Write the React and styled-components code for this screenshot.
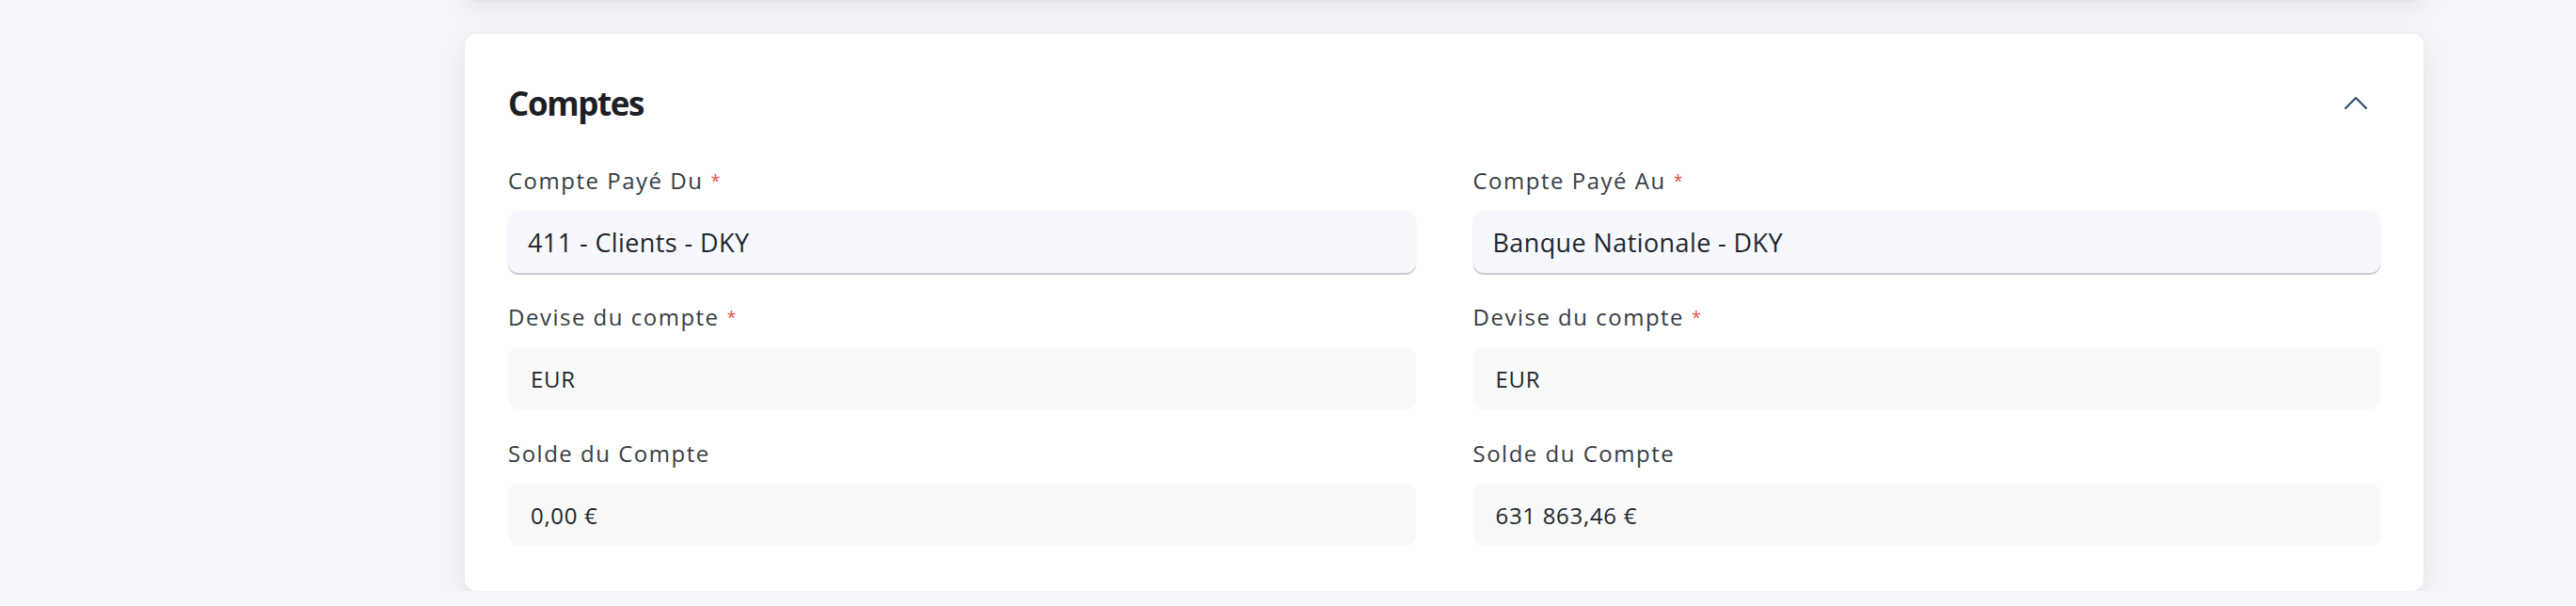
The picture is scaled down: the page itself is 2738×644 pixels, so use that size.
import React from 'react';
import styled, { createGlobalStyle } from 'styled-components';

const GlobalStyle = createGlobalStyle`
  html, body {
    margin: 0;
    padding: 0;
    background: #f4f5f9;
    font-family: "Open Sans", "Noto Sans", sans-serif;
    overflow: hidden;
  }
`;

const Main = styled.main`
  display: flex;
  flex-direction: column;
  gap: 36px;
  padding: 0 162px 0 494px;
  /* page is scrolled: the previous card sits above the fold */
  margin-top: -240px;
`;

const Card = styled.section`
  background: #ffffff;
  border-radius: 12px;
  box-shadow: 0 8px 26px rgba(25, 35, 70, 0.08), 0 1px 3px rgba(25, 35, 70, 0.04);
  padding: 46px 46px 48px;
`;

const HiddenCard = styled(Card)`
  height: 146px;
`;

const Header = styled.div`
  display: flex;
  align-items: center;
  justify-content: space-between;
  height: 54px;
  margin-bottom: 40px;
`;

const Title = styled.h2`
  margin: 0;
  font-size: 35px;
  font-weight: 700;
  color: #1c2024;
  letter-spacing: -1.4px;
`;

const Toggle = styled.button`
  width: 52px;
  height: 52px;
  border: none;
  background: transparent;
  display: flex;
  align-items: center;
  justify-content: center;
  padding: 0;
  cursor: pointer;
`;

const Grid = styled.div`
  display: grid;
  grid-template-columns: 1fr 1fr;
  column-gap: 61px;
  row-gap: 31px;
`;

const Field = styled.div`
  display: flex;
  flex-direction: column;
`;

const Label = styled.label`
  font-size: 24px;
  line-height: 32px;
  letter-spacing: 1.5px;
  color: #373c42;
  margin-bottom: 16px;
`;

const Required = styled.span`
  color: #e5534b;
  font-size: 18px;
  vertical-align: top;
  margin-left: 8px;
`;

const Value = styled.div`
  height: 66px;
  box-sizing: border-box;
  display: flex;
  align-items: center;
  border-radius: 11px;
  padding: 0 ${(p) => (p.$select ? '21px' : '24px')};
  background: ${(p) => (p.$select ? '#f7f8fd' : '#f8f9f9')};
  box-shadow: ${(p) => (p.$select ? '0 2px 1px rgba(60, 70, 85, 0.28)' : 'none')};
  font-size: ${(p) => (p.$select ? '27px' : '24px')};
  letter-spacing: ${(p) => (p.$select ? '0.4px' : '0.7px')};
  color: #22262b;
`;

const ChevronUp = () => (
  <svg width="24" height="14" viewBox="0 0 24 14" fill="none">
    <polyline points="1,13 12,2 23,13" stroke="#2d4a6b" strokeWidth="2" strokeLinecap="round" strokeLinejoin="round" />
  </svg>
);

const fields = [
  { label: 'Compte Payé Du', value: '411 - Clients - DKY', required: true, select: true },
  { label: 'Compte Payé Au', value: 'Banque Nationale - DKY', required: true, select: true },
  { label: 'Devise du compte', value: 'EUR', required: true },
  { label: 'Devise du compte', value: 'EUR', required: true },
  { label: 'Solde du Compte', value: '0,00 €' },
  { label: 'Solde du Compte', value: '631 863,46 €' },
];

export default function App() {
  return (
    <>
      <GlobalStyle />
      <Main>
        <HiddenCard />
        <Card>
          <Header>
            <Title>Comptes</Title>
            <Toggle aria-label="Replier">
              <ChevronUp />
            </Toggle>
          </Header>
          <Grid>
            {fields.map((f, i) => (
              <Field key={i}>
                <Label>
                  {f.label}
                  {f.required && <Required>*</Required>}
                </Label>
                <Value $select={f.select}>{f.value}</Value>
              </Field>
            ))}
          </Grid>
        </Card>
      </Main>
    </>
  );
}
